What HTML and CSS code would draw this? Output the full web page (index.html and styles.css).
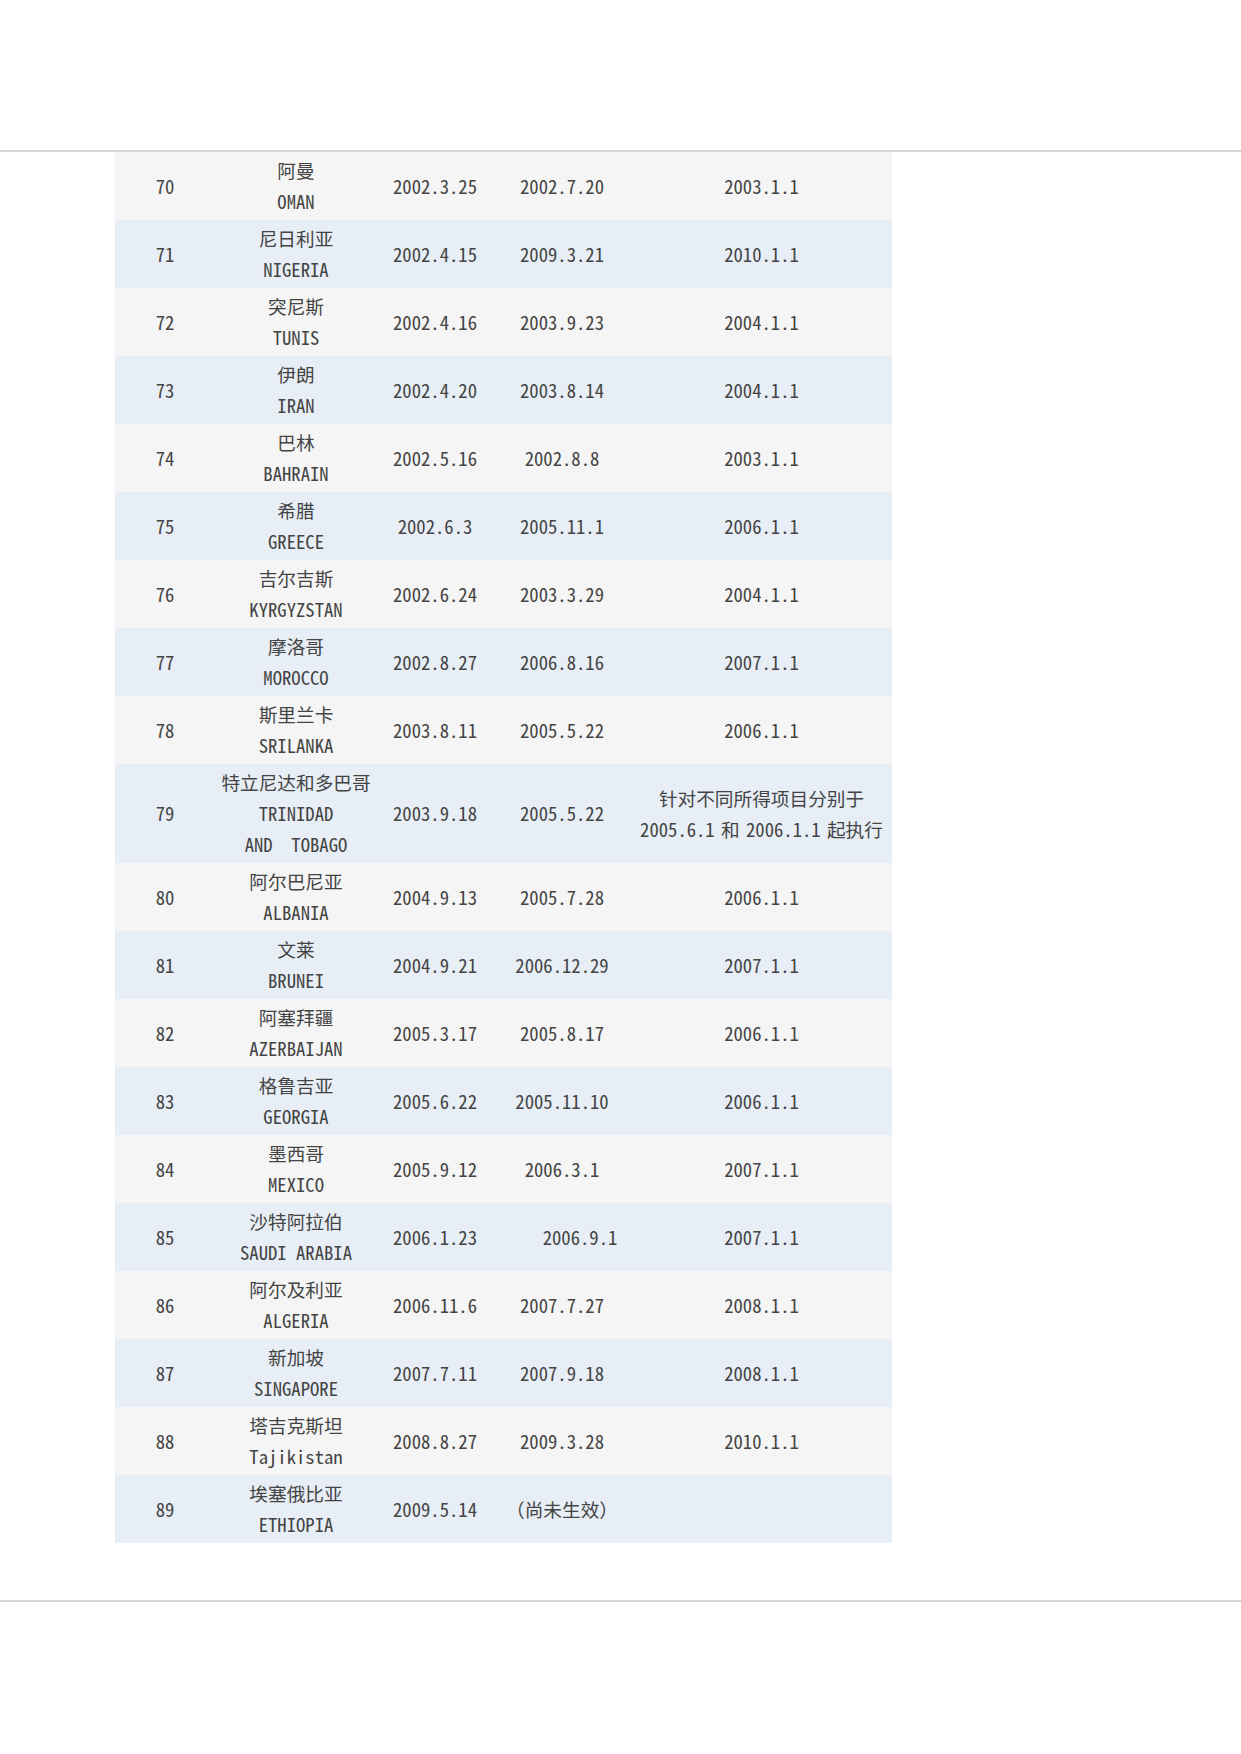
FILE: index.html
```html
<!DOCTYPE html>
<html lang="zh-CN">
<head>
    <meta charset="UTF-8">
    <title>税收协定一览</title>
    <link rel="stylesheet" href="styles.css">
</head>
<body>

<div class="head-space"></div>
<hr class="rule">

<table class="treaties">
    <colgroup>
        <col class="c-no">
        <col class="c-country">
        <col class="c-sign">
        <col class="c-force">
        <col class="c-exec">
    </colgroup>
    <tr><td>70</td><td>阿曼<br>OMAN</td><td>2002.3.25</td><td>2002.7.20</td><td>2003.1.1</td></tr>
    <tr><td>71</td><td>尼日利亚<br>NIGERIA</td><td>2002.4.15</td><td>2009.3.21</td><td>2010.1.1</td></tr>
    <tr><td>72</td><td>突尼斯<br>TUNIS</td><td>2002.4.16</td><td>2003.9.23</td><td>2004.1.1</td></tr>
    <tr><td>73</td><td>伊朗<br>IRAN</td><td>2002.4.20</td><td>2003.8.14</td><td>2004.1.1</td></tr>
    <tr><td>74</td><td>巴林<br>BAHRAIN</td><td>2002.5.16</td><td>2002.8.8</td><td>2003.1.1</td></tr>
    <tr><td>75</td><td>希腊<br>GREECE</td><td>2002.6.3</td><td>2005.11.1</td><td>2006.1.1</td></tr>
    <tr><td>76</td><td>吉尔吉斯<br>KYRGYZSTAN</td><td>2002.6.24</td><td>2003.3.29</td><td>2004.1.1</td></tr>
    <tr><td>77</td><td>摩洛哥<br>MOROCCO</td><td>2002.8.27</td><td>2006.8.16</td><td>2007.1.1</td></tr>
    <tr><td>78</td><td>斯里兰卡<br>SRILANKA</td><td>2003.8.11</td><td>2005.5.22</td><td>2006.1.1</td></tr>
    <tr><td>79</td><td>特立尼达和多巴哥<br>TRINIDAD<br>AND&nbsp;&nbsp;TOBAGO</td><td>2003.9.18</td><td>2005.5.22</td><td class="note">针对不同所得项目分别于<br>2005.6.1 和 2006.1.1 起执行</td></tr>
    <tr><td>80</td><td>阿尔巴尼亚<br>ALBANIA</td><td>2004.9.13</td><td>2005.7.28</td><td>2006.1.1</td></tr>
    <tr><td>81</td><td>文莱<br>BRUNEI</td><td>2004.9.21</td><td>2006.12.29</td><td>2007.1.1</td></tr>
    <tr><td>82</td><td>阿塞拜疆<br>AZERBAIJAN</td><td>2005.3.17</td><td>2005.8.17</td><td>2006.1.1</td></tr>
    <tr><td>83</td><td>格鲁吉亚<br>GEORGIA</td><td>2005.6.22</td><td>2005.11.10</td><td>2006.1.1</td></tr>
    <tr><td>84</td><td>墨西哥<br>MEXICO</td><td>2005.9.12</td><td>2006.3.1</td><td>2007.1.1</td></tr>
    <tr><td>85</td><td>沙特阿拉伯<br>SAUDI ARABIA</td><td>2006.1.23</td><td class="shift">2006.9.1</td><td>2007.1.1</td></tr>
    <tr><td>86</td><td>阿尔及利亚<br>ALGERIA</td><td>2006.11.6</td><td>2007.7.27</td><td>2008.1.1</td></tr>
    <tr><td>87</td><td>新加坡<br>SINGAPORE</td><td>2007.7.11</td><td>2007.9.18</td><td>2008.1.1</td></tr>
    <tr><td>88</td><td>塔吉克斯坦<br>Tajikistan</td><td>2008.8.27</td><td>2009.3.28</td><td>2010.1.1</td></tr>
    <tr><td>89</td><td>埃塞俄比亚<br>ETHIOPIA</td><td>2009.5.14</td><td>（尚未生效）</td><td></td></tr>
</table>

<hr class="rule rule-bottom">

</body>
</html>
```

FILE: styles.css
```css
body {
    margin:      0;
    background:  white;
    color:       #444;
    font-family: "Noto Sans Mono CJK SC", "Noto Sans CJK SC", "Liberation Mono", monospace;
    font-size:   18.67px;
}

.head-space {
    height:     150px;
}

.rule {
    margin:     0;
    border:     0;
    height:     2px;
    background: #d6d6d6;
}
.rule-bottom {
    margin-top: 57px;
}

.treaties {
    margin-left:     115px;
    width:           777px;
    table-layout:    fixed;
    border-collapse: collapse;
}
.treaties col.c-no      { width: 100px; }
.treaties col.c-country { width: 162px; }
.treaties col.c-sign    { width: 116px; }
.treaties col.c-force   { width: 138px; }
.treaties col.c-exec    { width: 261px; }

.treaties tr:nth-child(odd)  { background: #f5f5f5; }
.treaties tr:nth-child(even) { background: #e7eef6; }

.treaties td {
    padding:        2px 0 4px;
    height:         62px;
    line-height:    31px;
    text-align:     center;
    vertical-align: middle;
    white-space:    nowrap;
}
.treaties td.shift {
    padding-left:   36px;
}
.treaties td.note {
    word-spacing:   -3px;
}
```
